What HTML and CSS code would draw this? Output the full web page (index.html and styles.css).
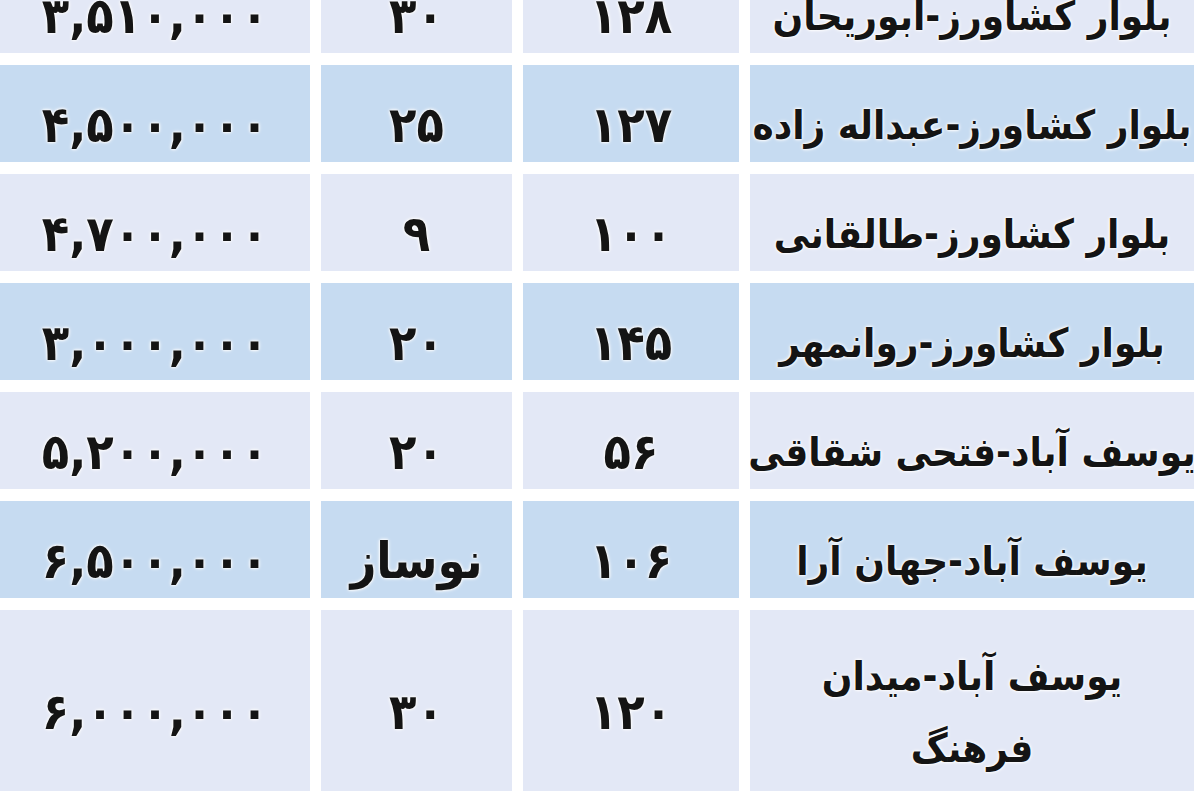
FILE: index.html
```html
<!DOCTYPE html>
<html lang="fa" dir="ltr">
<head>
<meta charset="utf-8">
<title>قیمت مسکن</title>
<link rel="stylesheet" href="styles.css">
</head>
<body>
<div class="table">
  <div class="row light">
    <div class="cell place">بلوار کشاورز-ابوریحان</div>
    <div class="cell">۱۲۸</div>
    <div class="cell">۳۰</div>
    <div class="cell price">۳,۵۱۰,۰۰۰</div>
  </div>
  <div class="row blue">
    <div class="cell place">بلوار کشاورز-عبداله زاده</div>
    <div class="cell">۱۲۷</div>
    <div class="cell">۲۵</div>
    <div class="cell price">۴,۵۰۰,۰۰۰</div>
  </div>
  <div class="row light">
    <div class="cell place">بلوار کشاورز-طالقانی</div>
    <div class="cell">۱۰۰</div>
    <div class="cell">۹</div>
    <div class="cell price">۴,۷۰۰,۰۰۰</div>
  </div>
  <div class="row blue">
    <div class="cell place">بلوار کشاورز-روانمهر</div>
    <div class="cell">۱۴۵</div>
    <div class="cell">۲۰</div>
    <div class="cell price">۳,۰۰۰,۰۰۰</div>
  </div>
  <div class="row light">
    <div class="cell place">یوسف آباد-فتحی شقاقی</div>
    <div class="cell">۵۶</div>
    <div class="cell">۲۰</div>
    <div class="cell price">۵,۲۰۰,۰۰۰</div>
  </div>
  <div class="row blue">
    <div class="cell place">یوسف آباد-جهان آرا</div>
    <div class="cell">۱۰۶</div>
    <div class="cell">نوساز</div>
    <div class="cell price">۶,۵۰۰,۰۰۰</div>
  </div>
  <div class="row light tall">
    <div class="cell place">یوسف آباد-میدان<br>فرهنگ</div>
    <div class="cell">۱۲۰</div>
    <div class="cell">۳۰</div>
    <div class="cell price">۶,۰۰۰,۰۰۰</div>
  </div>
</div>
</body>
</html>
```
FILE: styles.css
```css
html, body {
  margin: 0;
  padding: 0;
  background: #ffffff;
}

body {
  width: 1200px;
  height: 800px;
  overflow: hidden;
  font-family: "DejaVu Sans Condensed", "DejaVu Sans", sans-serif;
}

.table {
  direction: rtl;
  width: 1194px;
  margin-top: -44px;
  display: flex;
  flex-direction: column;
  gap: 12px;
}

.row {
  display: grid;
  grid-template-columns: 444px 216px 191px 310px;
  column-gap: 11px;
  height: 97px;
}

.row.tall {
  height: 181px;
}

.cell {
  display: flex;
  align-items: center;
  justify-content: center;
  text-align: center;
  padding-top: 22px;
  box-sizing: border-box;
  font-size: 50px;
  font-weight: bold;
  color: #141414;
  line-height: 1;
  text-shadow: 0 0 2px #fff, 0 0 3px #fff, 0 0 4px #fff;
  white-space: nowrap;
  overflow: hidden;
}

.place {
  font-size: 40px;
  line-height: 72px;
  letter-spacing: -0.5px;
}

.price {
  direction: ltr;
}

.row.light .cell {
  background: #e3e8f6;
}

.row.blue .cell {
  background: #c6dbf1;
}
```
